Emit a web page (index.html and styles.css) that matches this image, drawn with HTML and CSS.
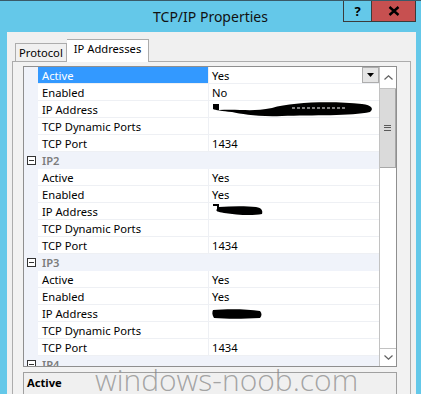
FILE: index.html
```html
<!DOCTYPE html>
<html lang="en">
<head>
    <meta charset="UTF-8">
    <title>TCP/IP Properties</title>
    <link rel="stylesheet" href="styles.css">
</head>
<body>
    <div class="window">
        <div class="titlebar">
            <div class="title">TCP/IP Properties</div>
            <div class="caption-buttons">
                <div class="cap-btn help">?</div>
                <div class="cap-btn close">
                    <svg width="12" height="10" viewBox="0 0 12 10"><path d="M1.5 1 L10.5 9 M10.5 1 L1.5 9" stroke="#000" stroke-width="2.4"/></svg>
                </div>
            </div>
        </div>

        <div class="client">
            <div class="tabs">
                <div class="tab">Protocol</div>
                <div class="tab selected">IP Addresses</div>
            </div>
            <div class="tab-page">
                <div class="grid">
                    <div class="grid-rows">
                        <div class="prop">
                            <div class="margin"></div>
                            <div class="name active">Active</div>
                            <div class="value">Yes
                                <div class="dd-btn"><svg width="7" height="4" viewBox="0 0 7 4"><path d="M0 0 H7 L3.5 4 Z" fill="#000"/></svg></div>
                            </div>
                        </div>
                        <div class="prop"><div class="margin"></div><div class="name">Enabled</div><div class="value">No</div></div>
                        <div class="prop"><div class="margin"></div><div class="name">IP Address</div>
                            <div class="value">
                                <svg class="redact big" width="162" height="18" viewBox="0 0 162 18"><path d="M1 4 H7 V10 C30 9 40 12 60 8 C80 2 120 1 150 4 C160 5 162 9 158 12 C140 16 100 15 70 16 C45 17 30 14 20 12 C10 11 3 10 1 9 Z" fill="#000"/><path d="M80 8 H135" stroke="#fff" stroke-width="1" stroke-dasharray="3 2"/></svg>
                            </div>
                        </div>
                        <div class="prop"><div class="margin"></div><div class="name">TCP Dynamic Ports</div><div class="value"></div></div>
                        <div class="prop"><div class="margin"></div><div class="name">TCP Port</div><div class="value">1434</div></div>

                        <div class="category"><span class="toggle"></span>IP2</div>
                        <div class="prop"><div class="margin"></div><div class="name">Active</div><div class="value">Yes</div></div>
                        <div class="prop"><div class="margin"></div><div class="name">Enabled</div><div class="value">Yes</div></div>
                        <div class="prop"><div class="margin"></div><div class="name">IP Address</div>
                            <div class="value">
                                <svg class="redact" width="52" height="14" viewBox="0 0 52 14"><path d="M1 1 H7 V4 C20 3 35 3 44 4 C50 5 51 8 50 11 C40 13 25 12 12 10 C6 9 3 8 5 6 V3 H1 Z" fill="#000"/></svg>
                            </div>
                        </div>
                        <div class="prop"><div class="margin"></div><div class="name">TCP Dynamic Ports</div><div class="value"></div></div>
                        <div class="prop"><div class="margin"></div><div class="name">TCP Port</div><div class="value">1434</div></div>

                        <div class="category"><span class="toggle"></span>IP3</div>
                        <div class="prop"><div class="margin"></div><div class="name">Active</div><div class="value">Yes</div></div>
                        <div class="prop"><div class="margin"></div><div class="name">Enabled</div><div class="value">Yes</div></div>
                        <div class="prop"><div class="margin"></div><div class="name">IP Address</div>
                            <div class="value">
                                <svg class="redact small" width="50" height="10" viewBox="0 0 50 10"><path d="M1 1 C15 0 35 0 48 2 C50 4 50 7 48 9 C30 10 15 10 2 9 C0 6 0 3 1 1 Z" fill="#000"/></svg>
                            </div>
                        </div>
                        <div class="prop"><div class="margin"></div><div class="name">TCP Dynamic Ports</div><div class="value"></div></div>
                        <div class="prop"><div class="margin"></div><div class="name">TCP Port</div><div class="value">1434</div></div>

                        <div class="category"><span class="toggle"></span>IP4</div>
                    </div>
                    <div class="scrollbar">
                        <div class="sb-btn up"><svg width="9" height="5" viewBox="0 0 9 5"><path d="M0.5 4.5 L4.5 0.8 L8.5 4.5" fill="none" stroke="#606060" stroke-width="1.2"/></svg></div>
                        <div class="sb-thumb"><span class="grip"></span></div>
                        <div class="sb-track"></div>
                        <div class="sb-btn down"><svg width="9" height="5" viewBox="0 0 9 5"><path d="M0.5 0.5 L4.5 4.2 L8.5 0.5" fill="none" stroke="#606060" stroke-width="1.2"/></svg></div>
                    </div>
                </div>
                <div class="description">
                    <div class="desc-title">Active</div>
                </div>
            </div>
        </div>

        <div class="watermark">windows-noob.com</div>
    </div>
</body>
</html>
```

FILE: styles.css
```css
body {
    margin: 0;
    padding: 0;
    background-color: #64c8e9;
    font-family: "Noto Sans", "Open Sans", sans-serif;
    font-size: 11.2px;
    color: #000;
    overflow: hidden;
}
.window {
    position: relative;
    width: 421px;
    height: 394px;
    overflow: hidden;
    border-top: 1px solid #3a5a68;
    box-sizing: border-box;
}
.titlebar {
    position: relative;
    height: 31px;
}
.title {
    text-align: center;
    font-size: 14px;
    line-height: 32px;
    color: #111;
}
.caption-buttons {
    position: absolute;
    top: 0;
    right: 5px;
    display: flex;
}
.cap-btn {
    height: 21px;
    border: 1px solid #3b3b3b;
    border-top: none;
    box-sizing: border-box;
    display: flex;
    align-items: center;
    justify-content: center;
}
.cap-btn.help {
    width: 28px;
    font-weight: bold;
    font-size: 13px;
    border-right: none;
}
.cap-btn.close {
    width: 45px;
    background-color: #c75050;
}
.client {
    margin: 0 5px 0 7px;
    height: 362px;
    background-color: #f0f0f0;
    padding: 7px 5px 0 5px;
    box-sizing: border-box;
}
.tabs {
    display: flex;
    align-items: flex-end;
    padding-left: 3px;
    height: 22px;
}
.tab {
    border: 1px solid #acacac;
    border-bottom: none;
    height: 18px;
    line-height: 18px;
    padding: 0 3px 0 3px;
    box-sizing: border-box;
    background-color: #f0f0f0;
}
.tab.selected {
    height: 23px;
    margin-bottom: -1px;
    padding: 0 7px 2px 7px;
    line-height: 18px;
    background-color: #fff;
    border-left: none;
    position: relative;
    z-index: 1;
}
.tab-page {
    border: 1px solid #acacac;
    border-bottom: none;
    height: 340px;
    padding: 4px 13px 0 10px;
    background-color: #f2f2f2;
}
.grid {
    display: flex;
    border: 1px solid #8f8f8f;
    height: 299px;
    background-color: #fff;
}
.grid-rows {
    width: 356px;
    overflow: hidden;
}
.prop {
    display: grid;
    grid-template-columns: 14px 170px 1px 1fr;
    height: 17px;
}
.margin {
    background-color: #f0f3fa;
}
.name {
    padding-left: 4px;
    line-height: 17px;
    height: 16px;
    border-bottom: 1px solid #eef0f4;
    white-space: nowrap;
}
.name.active {
    background-color: #3399ff;
    color: #fff;
}
.value {
    grid-column: 4;
    position: relative;
    padding-left: 3px;
    line-height: 17px;
    height: 16px;
    border-bottom: 1px solid #eef0f4;
    border-left: 1px solid #eef0f4;
    margin-left: -1px;
}
.redact {
    display: block;
    margin-top: 0;
}
.redact.small {
    margin-top: 4px;
}
.redact.big {
    margin-top: -1px;
}
.dd-btn {
    position: absolute;
    top: 0;
    right: 0;
    width: 17px;
    height: 16px;
    box-sizing: border-box;
    border: 1px solid #adadad;
    background-color: #e5e5e5;
    display: flex;
    align-items: center;
    justify-content: center;
}
.category {
    height: 17px;
    line-height: 17px;
    background-color: #f0f3fa;
    color: #7c7c7c;
    font-weight: 600;
    display: flex;
    align-items: center;
    padding-left: 3px;
}
.toggle {
    width: 9px;
    height: 9px;
    box-sizing: border-box;
    border: 1px solid #333;
    background-color: #fff;
    position: relative;
    margin-right: 6px;
}
.toggle::after {
    content: "";
    position: absolute;
    left: 1px;
    right: 1px;
    top: 3px;
    height: 1px;
    background-color: #333;
}
.scrollbar {
    width: 17px;
    display: flex;
    flex-direction: column;
    background-color: #fff;
    border-left: 1px solid #c2c2c2;
    box-sizing: border-box;
}
.sb-btn {
    height: 17px;
    display: flex;
    align-items: center;
    justify-content: center;
}
.sb-btn.up {
    height: 21px;
    border-bottom: 1px solid #c2c2c2;
}
.sb-btn.down {
    border-top: 1px solid #c2c2c2;
}
.sb-thumb {
    height: 78px;
    background-color: #dadada;
    border-right: 1px solid #a8a8a8;
    border-bottom: 1px solid #a8a8a8;
    display: flex;
    align-items: center;
    justify-content: center;
}
.grip {
    width: 7px;
    height: 6px;
    background: linear-gradient(#5a5a5a 0 1px, transparent 1px 2.5px, #5a5a5a 2.5px 3.5px, transparent 3.5px 5px, #5a5a5a 5px 6px);
}
.sb-track {
    flex-grow: 1;
}
.description {
    margin-top: 5px;
    border: 1px solid #a0a0a0;
    border-bottom: none;
    height: 40px;
    padding: 2px 3px;
    background-color: #f0f0f0;
}
.desc-title {
    font-weight: bold;
}
.watermark {
    position: absolute;
    left: 95px;
    top: 358px;
    font-family: "Open Sans", sans-serif;
    font-weight: 300;
    font-size: 30px;
    color: rgba(130, 130, 130, 0.7);
    white-space: nowrap;
}
```
